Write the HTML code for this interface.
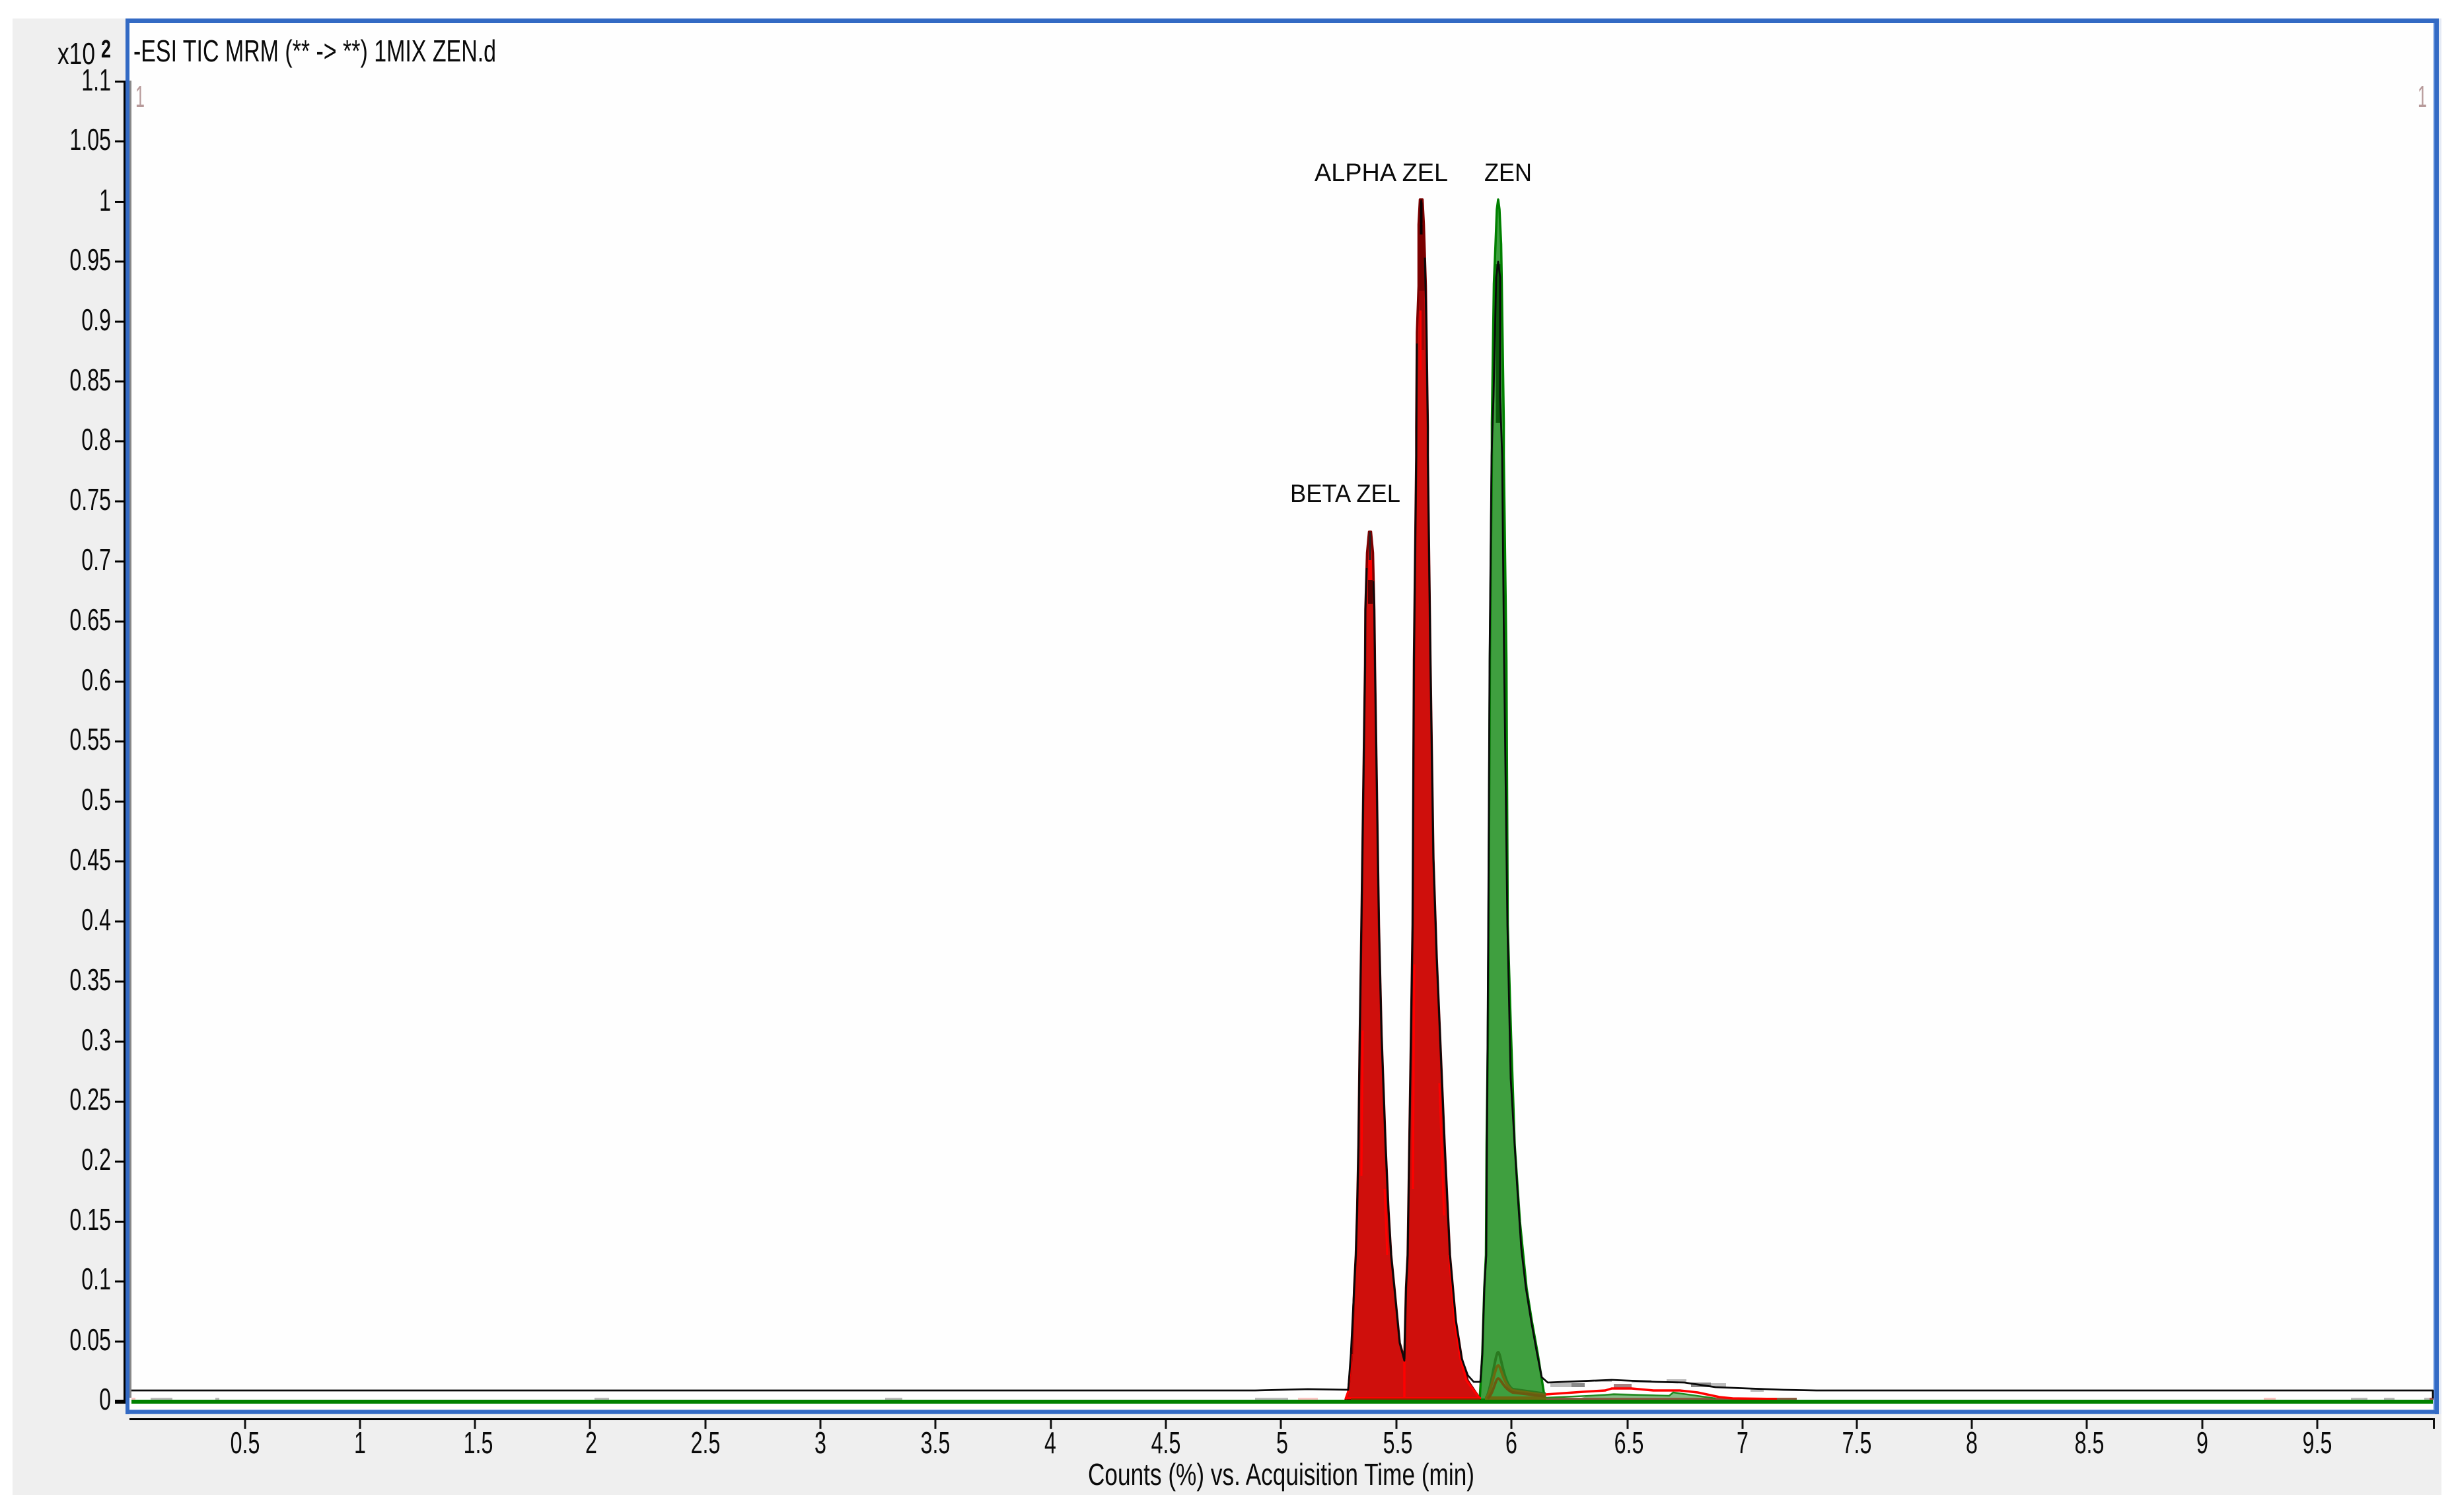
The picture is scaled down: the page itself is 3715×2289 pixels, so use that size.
<!DOCTYPE html>
<html><head><meta charset="utf-8"><title>Chromatogram</title>
<style>
html,body{margin:0;padding:0;background:#fff;width:3715px;height:2289px;overflow:hidden}
svg{display:block}
text{font-family:"Liberation Sans",sans-serif;fill:#0a0a0a}
.a{font-size:46px}
.e{text-anchor:end}
.m{text-anchor:middle}
</style></head><body>
<svg width="3715" height="2289" viewBox="0 0 3715 2289" xmlns="http://www.w3.org/2000/svg">
<rect width="3715" height="2289" fill="#fff"/>
<rect x="19" y="28" width="3677" height="2235" fill="#efefef"/>
<rect x="3692" y="28" width="4" height="2113" fill="#e4eaf5"/>
<rect x="190" y="28" width="3502" height="2113" fill="#336ac4"/>
<rect x="196" y="35" width="3490" height="2099" fill="#fefefe"/>
<rect x="3684" y="35" width="2" height="2099" fill="#4f83d6"/>
<rect x="196" y="2134" width="3490" height="1" fill="#5f88d0"/>
<rect x="196" y="2140" width="3490" height="1" fill="#6f94d4"/>

<!-- axes -->
<rect x="187" y="122" width="3" height="2003" fill="#000"/>
<rect x="196" y="122" width="3" height="1994" fill="#888"/>
<rect x="196" y="2147" width="3490" height="3" fill="#000"/>
<rect x="3683" y="2147" width="3" height="16" fill="#111"/>
<path stroke="#000" stroke-width="3" fill="none" d="M174 123.5H187M174 214H187M174 305.5H187M174 396H187M174 487H187M174 577.5H187M174 668H187M174 759H187M174 850H187M174 941H187M174 1032H187M174 1122.5H187M174 1213.5H187M174 1304H187M174 1395H187M174 1486H187M174 1577H187M174 1668H187M174 1758.5H187M174 1849.5H187M174 1940H187M174 2031H187"/>
<rect x="174" y="2119" width="16" height="6" fill="#000"/>
<path stroke="#111" stroke-width="3" fill="none" d="M371 2150V2163M545 2150V2163M719 2150V2163M893 2150V2163M1068 2150V2163M1242 2150V2163M1416 2150V2163M1591 2150V2163M1765 2150V2163M1939 2150V2163M2114 2150V2163M2288 2150V2163M2464 2150V2163M2638 2150V2163M2811 2150V2163M2985 2150V2163M3159 2150V2163M3334 2150V2163M3508 2150V2163"/>

<!-- noise marks along baseline -->
<g fill="#bbb">
<rect x="228" y="2116" width="33" height="3"/><rect x="326" y="2116" width="6" height="3"/>
<rect x="900" y="2116" width="22" height="3"/><rect x="1340" y="2116" width="26" height="3"/>
<rect x="1900" y="2116" width="50" height="3"/>
<rect x="3559" y="2116" width="25" height="3"/><rect x="3609" y="2116" width="16" height="3"/><rect x="3670" y="2116" width="8" height="3"/>
<rect x="2347" y="2094" width="32" height="6"/><rect x="2415" y="2089" width="25" height="3"/><rect x="2470" y="2089" width="30" height="4"/><rect x="2523" y="2088" width="30" height="4"/><rect x="2590" y="2094" width="23" height="6"/><rect x="2650" y="2102" width="20" height="5"/>
</g>
<g fill="#888"><rect x="2379" y="2094" width="20" height="6"/><rect x="2560" y="2093" width="30" height="7"/></g>
<rect x="2443" y="2095" width="27" height="6" fill="#a78080"/>
<g fill="#fbc4c4"><rect x="199" y="2116" width="6" height="3"/><rect x="3427" y="2116" width="18" height="3"/><rect x="1965" y="2116" width="30" height="3"/></g>
<rect x="3678" y="2116" width="6" height="3" fill="#a55"/>

<!-- green filled peak -->
<path d="M2240 2119L2244 2050L2247 1950L2249.5 1900L2250.5 1733L2252.5 1567L2253.5 1400L2255.5 1000L2258.5 690L2258.5 640L2261.5 430L2264 370L2266 317L2268 302L2270 317L2272.5 370L2273.5 430L2276.5 640L2276.5 690L2280.5 1000L2282.5 1400L2287.5 1567L2293 1733L2301 1850L2306 1900L2311 1950L2319 2000L2328 2050L2337 2107L2340 2119Z" fill="#3f9f3f" stroke="#008000" stroke-width="3.5" stroke-linejoin="round"/>
<path d="M2268 400V640" stroke="#0b5a0b" stroke-width="7" fill="none"/>

<!-- red filled peaks -->
<path d="M2037 2119L2041 2107L2046.5 2050L2050 1950L2052.5 1900L2054.5 1833L2056.5 1733L2058.5 1567L2061 1400L2066.5 1007L2067 923L2069.5 837L2072.5 805L2075.5 805L2078.5 837L2080.5 923L2081.5 1007L2087.5 1400L2091.5 1567L2097.5 1733L2102 1833L2106 1900L2111 1950L2119 2033L2126 2057L2128.5 1950L2131 1900L2133.5 1733L2136 1567L2138.5 1400L2140.5 1000L2144 690L2144 647L2145 503L2147.5 433L2147.5 340L2149.5 302L2153.5 302L2155.5 340L2158.5 433L2159.5 503L2161.5 647L2161.5 690L2165.5 1000L2170 1300L2175 1450L2180 1567L2187 1733L2195 1900L2204 2000L2213 2057L2222 2090L2240 2117L2240 2119Z" fill="#cf0f0c" stroke="#7c0000" stroke-width="3.5" stroke-linejoin="round"/>
<rect x="2148.5" y="340" width="8" height="100" fill="#7a0000"/>
<rect x="2148.5" y="440" width="8" height="90" fill="#a00606"/>

<!-- bright red highlights inside the edges -->
<path d="M2141 1460L2139 1800M2179 1640L2186 1840M2063 1560L2061 1780M2096 1800L2100 1900M2150.5 470V560" fill="none" stroke="#f00" stroke-width="3"/>
<path d="M2037 2118L2041 2107L2046 2050M2126 2057V2118M2194 1900L2202 2000L2211 2057L2220 2090L2240 2117" fill="none" stroke="#f00" stroke-width="3.5"/>
<rect x="2037" y="2115" width="205" height="3" fill="#f00"/>
<rect x="2045" y="2117" width="195" height="2" fill="#8a2a00"/>

<!-- inner peaks on ZEN -->
<rect x="2248" y="2114" width="92" height="5" fill="#6b6a10"/>
<path d="M2250 2117C2258 2100 2264 2047 2268 2047C2272 2047 2276 2095 2290 2103L2340 2110" fill="none" stroke="#2a7a20" stroke-width="4"/>
<path d="M2250 2117C2258 2105 2264 2067 2268 2067C2272 2067 2276 2097 2290 2105L2340 2112" fill="none" stroke="#6b6a10" stroke-width="4"/>
<path d="M2252 2117C2260 2112 2264 2087 2268 2087C2272 2087 2276 2102 2290 2108L2340 2114" fill="none" stroke="#6b5a10" stroke-width="4"/>

<!-- black TIC trace -->
<path d="M199 2105H1900L1980 2103L2041 2104L2045 2050L2050 1950L2052.5 1900L2054.5 1833L2056.5 1733L2058.5 1567L2061 1400L2066.5 1007L2067 923L2069 860M2079 880L2080.5 923L2081.5 1007L2087.5 1400L2091.5 1567L2097.5 1733L2102 1833L2106 1900L2111 1950L2119 2033L2126 2060L2128.5 1950L2131 1900L2133.5 1733L2136 1567L2138.5 1400L2140.5 1000L2144 690L2145 520M2157 390L2159.5 503L2161.5 647L2161.5 690L2165.5 1000L2170 1300L2175 1450L2180 1567L2187 1733L2195 1900L2204 2000L2213 2057L2222 2082L2231 2092H2241L2244 2050L2247 1950L2250 1900L2251 1733L2253 1400L2255 1000L2258 690L2261 600L2265 420L2268 396L2271 420L2271 600L2274 690L2277 1000L2282 1400L2287 1633L2297 1800L2303 1890L2310 1950L2318 2000L2327 2050L2334 2085L2343 2093L2440 2089L2507 2092L2550 2093L2597 2100L2647 2102L2700 2104L2750 2105H3683V2117" fill="none" stroke="#0a0a0a" stroke-width="2.8" stroke-linejoin="round"/>

<!-- BETA apex -->
<path d="M2072.5 812L2073 805H2075L2075.5 812V848H2072.5Z" fill="#222"/>
<rect x="2071.5" y="848" width="5.5" height="30" fill="#f00"/>
<rect x="2071" y="878" width="7" height="36" fill="#5a0000"/>
<!-- ALPHA apex -->
<path d="M2149.5 308L2150.5 302H2152.5L2153.5 308V355H2149.5Z" fill="#0a0000"/>

<!-- low level traces to the right of ZEN -->
<path d="M2385 2118L2407 2113L2443 2109L2500 2111L2527 2113L2533 2108L2597 2118Z" fill="#86bd86"/>
<rect x="2340" y="2116" width="380" height="3" fill="#8a5a40"/>
<path d="M2340 2111L2397 2107L2430 2105L2440 2102L2470 2102L2503 2105L2543 2105L2570 2108L2603 2115L2623 2117L2690 2118" fill="none" stroke="#f00" stroke-width="3.5"/>
<path d="M2340 2116L2407 2113L2443 2111L2527 2113L2533 2108L2597 2117" fill="none" stroke="#1f8a1f" stroke-width="2.5"/>

<!-- green baseline -->
<rect x="199" y="2119" width="3484" height="6" fill="#008000"/>

<!-- titles -->
<text class="a" x="202" y="93" textLength="549" lengthAdjust="spacingAndGlyphs">-ESI TIC MRM (** -&gt; **) 1MIX ZEN.d</text>
<text class="a" x="87" y="97" textLength="57" lengthAdjust="spacingAndGlyphs">x10</text>
<text style="font-size:38px;font-weight:bold" x="153" y="87" textLength="15" lengthAdjust="spacingAndGlyphs">2</text>
<text class="a" x="205" y="162" textLength="14" lengthAdjust="spacingAndGlyphs" style="fill:#b79a9a">1</text>
<text class="a" x="3660" y="162" textLength="14" lengthAdjust="spacingAndGlyphs" style="fill:#b79a9a">1</text>
<text class="a" x="1647" y="2248" textLength="585" lengthAdjust="spacingAndGlyphs">Counts (%) vs. Acquisition Time (min)</text>

<!-- peak labels -->
<text style="font-size:38px" x="1990" y="274" textLength="202" lengthAdjust="spacingAndGlyphs">ALPHA ZEL</text>
<text style="font-size:38px" x="2247" y="274" textLength="72" lengthAdjust="spacingAndGlyphs">ZEN</text>
<text style="font-size:38px" x="1953" y="760" textLength="167" lengthAdjust="spacingAndGlyphs">BETA ZEL</text>

<!-- y labels -->
<g class="a e">
<text class="a e" transform="translate(168 137) scale(.7 1)">1.1</text>
<text class="a e" transform="translate(168 227) scale(.7 1)">1.05</text>
<text class="a e" transform="translate(168 319) scale(.7 1)">1</text>
<text class="a e" transform="translate(168 409) scale(.7 1)">0.95</text>
<text class="a e" transform="translate(168 500) scale(.7 1)">0.9</text>
<text class="a e" transform="translate(168 591) scale(.7 1)">0.85</text>
<text class="a e" transform="translate(168 681) scale(.7 1)">0.8</text>
<text class="a e" transform="translate(168 772) scale(.7 1)">0.75</text>
<text class="a e" transform="translate(168 863) scale(.7 1)">0.7</text>
<text class="a e" transform="translate(168 954) scale(.7 1)">0.65</text>
<text class="a e" transform="translate(168 1045) scale(.7 1)">0.6</text>
<text class="a e" transform="translate(168 1135) scale(.7 1)">0.55</text>
<text class="a e" transform="translate(168 1226) scale(.7 1)">0.5</text>
<text class="a e" transform="translate(168 1317) scale(.7 1)">0.45</text>
<text class="a e" transform="translate(168 1408) scale(.7 1)">0.4</text>
<text class="a e" transform="translate(168 1499) scale(.7 1)">0.35</text>
<text class="a e" transform="translate(168 1590) scale(.7 1)">0.3</text>
<text class="a e" transform="translate(168 1680) scale(.7 1)">0.25</text>
<text class="a e" transform="translate(168 1771) scale(.7 1)">0.2</text>
<text class="a e" transform="translate(168 1862) scale(.7 1)">0.15</text>
<text class="a e" transform="translate(168 1952) scale(.7 1)">0.1</text>
<text class="a e" transform="translate(168 2044) scale(.7 1)">0.05</text>
<text class="a e" transform="translate(168 2134) scale(.7 1)">0</text>
</g>

<!-- x labels -->
<text class="a m" transform="translate(371 2200) scale(.7 1)">0.5</text>
<text class="a m" transform="translate(545 2200) scale(.7 1)">1</text>
<text class="a m" transform="translate(724 2200) scale(.7 1)">1.5</text>
<text class="a m" transform="translate(895 2200) scale(.7 1)">2</text>
<text class="a m" transform="translate(1068 2200) scale(.7 1)">2.5</text>
<text class="a m" transform="translate(1242 2200) scale(.7 1)">3</text>
<text class="a m" transform="translate(1416 2200) scale(.7 1)">3.5</text>
<text class="a m" transform="translate(1590 2200) scale(.7 1)">4</text>
<text class="a m" transform="translate(1765 2200) scale(.7 1)">4.5</text>
<text class="a m" transform="translate(1941 2200) scale(.7 1)">5</text>
<text class="a m" transform="translate(2116 2200) scale(.7 1)">5.5</text>
<text class="a m" transform="translate(2288 2200) scale(.7 1)">6</text>
<text class="a m" transform="translate(2466 2200) scale(.7 1)">6.5</text>
<text class="a m" transform="translate(2638 2200) scale(.7 1)">7</text>
<text class="a m" transform="translate(2811 2200) scale(.7 1)">7.5</text>
<text class="a m" transform="translate(2985 2200) scale(.7 1)">8</text>
<text class="a m" transform="translate(3163 2200) scale(.7 1)">8.5</text>
<text class="a m" transform="translate(3334 2200) scale(.7 1)">9</text>
<text class="a m" transform="translate(3508 2200) scale(.7 1)">9.5</text>
</svg>
</body></html>
